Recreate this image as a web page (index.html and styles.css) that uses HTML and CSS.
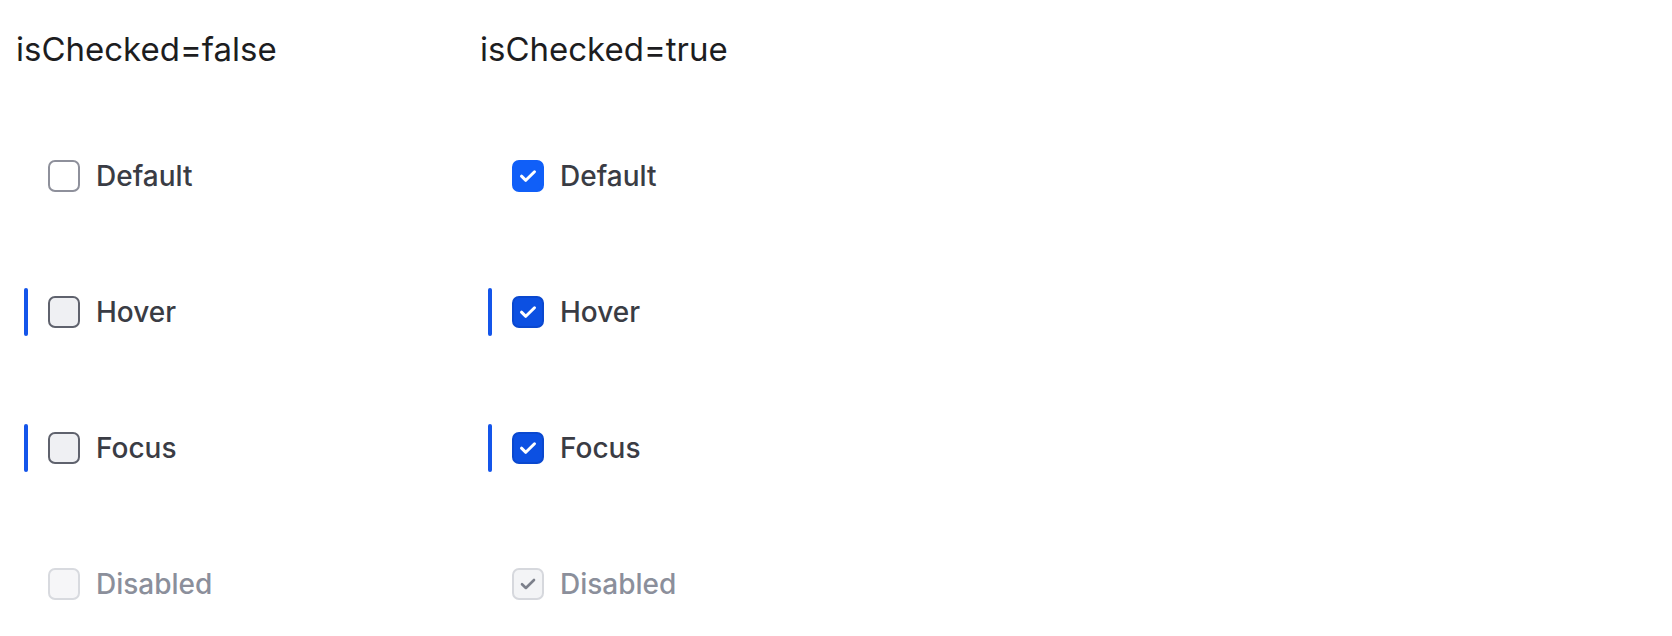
FILE: index.html
```html
<!DOCTYPE html>
<html>
<head>
<meta charset="utf-8">
<link rel="stylesheet" href="styles.css">
</head>
<body>
<div class="page">
  <div class="col">
    <div class="heading">isChecked=false</div>
    <div class="list">
      <div class="row"><span class="bar"></span><span class="box"></span><span class="label">Default</span></div>
      <div class="row hover"><span class="bar"></span><span class="box"></span><span class="label">Hover</span></div>
      <div class="row focus"><span class="bar"></span><span class="box"></span><span class="label">Focus</span></div>
      <div class="row disabled"><span class="bar"></span><span class="box"></span><span class="label">Disabled</span></div>
    </div>
  </div>
  <div class="col">
    <div class="heading">isChecked=true</div>
    <div class="list">
      <div class="row checked"><span class="bar"></span><span class="box"><svg viewBox="0 0 32 32"><path d="M9.5 16.2 L13.8 20.3 L22.5 11.8"/></svg></span><span class="label">Default</span></div>
      <div class="row checked hover"><span class="bar"></span><span class="box"><svg viewBox="0 0 32 32"><path d="M9.5 16.2 L13.8 20.3 L22.5 11.8"/></svg></span><span class="label">Hover</span></div>
      <div class="row checked focus"><span class="bar"></span><span class="box"><svg viewBox="0 0 32 32"><path d="M9.5 16.2 L13.8 20.3 L22.5 11.8"/></svg></span><span class="label">Focus</span></div>
      <div class="row checked disabled"><span class="bar"></span><span class="box"><svg viewBox="0 0 32 32"><path d="M10 16.2 L13.9 20 L22 12"/></svg></span><span class="label">Disabled</span></div>
    </div>
  </div>
</div>
</body>
</html>
```

FILE: styles.css
```css
html, body {
  margin: 0;
  padding: 0;
  background: #ffffff;
}
body {
  font-family: Inter, "Noto Sans", "Liberation Sans", sans-serif;
}
.page {
  display: flex;
  padding: 29px 0 0 16px;
}
.col {
  width: 464px;
  display: flex;
  flex-direction: column;
}
.heading {
  font-size: 33px;
  line-height: 40px;
  color: #1d1d1f;
  font-weight: 400;
}
.list {
  margin-top: 83px;
  display: flex;
  flex-direction: column;
  gap: 88px;
}
.row {
  display: flex;
  align-items: center;
  height: 48px;
  padding-left: 8px;
}
.bar {
  width: 4px;
  height: 48px;
  border-radius: 2px;
  margin-right: 20px;
  background: transparent;
}
.hover .bar, .focus .bar {
  background: #1455ea;
}
.box {
  box-sizing: border-box;
  width: 32px;
  height: 32px;
  border: 2px solid #8e909b;
  border-radius: 7px;
  background: #ffffff;
  display: flex;
  align-items: center;
  justify-content: center;
  margin-right: 16px;
}
.box svg {
  width: 32px;
  height: 32px;
  flex: none;
  margin: -2px;
}
.box svg path {
  fill: none;
  stroke: #ffffff;
  stroke-width: 3;
  stroke-linecap: round;
  stroke-linejoin: round;
}
.hover .box, .focus .box {
  background: #eff0f3;
  border-color: #5f626d;
}
.disabled .box {
  background: #f6f6f8;
  border-color: #d8dadf;
}
.checked .box {
  background: #105ff8;
  border-color: #105ff8;
}
.checked.hover .box, .checked.focus .box {
  background: #0c50e2;
  border-color: #0a48cf;
}
.checked.disabled .box {
  background: #f3f4f6;
  border-color: #d6d8dd;
}
.checked.disabled .box svg path {
  stroke: #7c808b;
  stroke-width: 2.6;
}
.label {
  font-size: 28px;
  line-height: 40px;
  font-weight: 500;
  color: #3a3c44;
}
.disabled .label {
  color: #8b8f9b;
}
```
